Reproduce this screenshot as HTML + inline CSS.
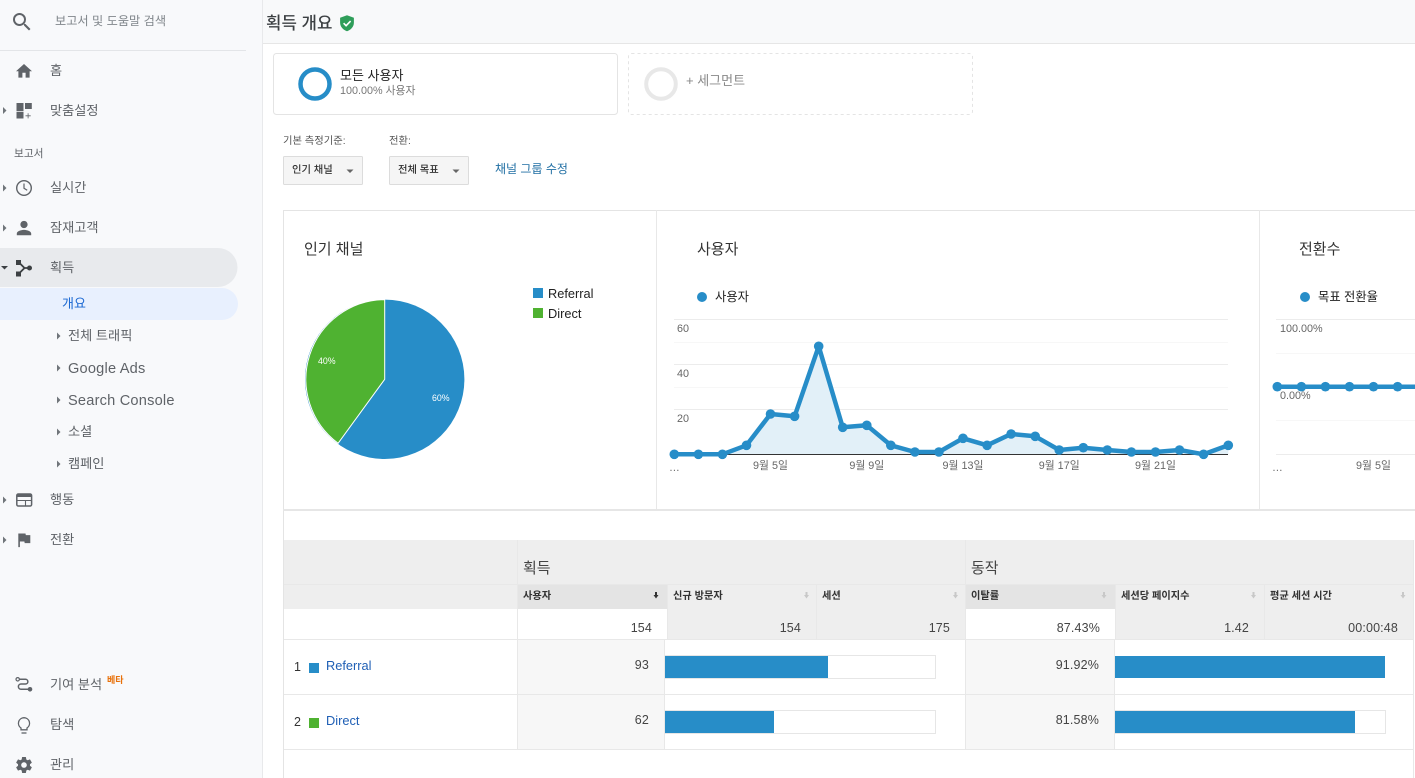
<!DOCTYPE html>
<html lang="ko"><head><meta charset="utf-8"><title>획득 개요</title>
<style>
html,body{margin:0;padding:0;width:1415px;height:778px;overflow:hidden;background:#fff}
svg{display:block;filter:blur(.3px)}
text{font-family:"Liberation Sans","Noto Sans CJK KR",sans-serif}
.nav{font-size:13.2px;fill:#5f6368}
.en{font-size:14.6px;letter-spacing:.2px}
.ic{fill:#5f6368}
.car{fill:#70757a}
.ax{font-size:10.8px;fill:#666}
.th{font-size:10.2px;font-weight:700;fill:#333}
.num{font-size:12.5px;fill:#444;text-anchor:end;letter-spacing:.15px}
.sort{fill:#c8c8c8}
</style></head><body>
<svg width="1415" height="778" viewBox="0 0 1415 778" xmlns="http://www.w3.org/2000/svg">
<rect width="1415" height="778" fill="#fff"/>
<!-- sidebar + header -->
<rect x="0" y="0" width="262" height="778" fill="#f8f9fb"/>
<rect x="262" y="0" width="1" height="778" fill="#e8e9eb"/>
<rect x="263" y="0" width="1152" height="43" fill="#f8f9fa"/>
<rect x="263" y="43" width="1152" height="1" fill="#e6e6e6"/>
<rect x="0" y="50" width="246" height="1" fill="#e3e5e8"/>
<path class="ic" transform="translate(10,10)" d="M15.5 14h-.79l-.28-.27A6.471 6.471 0 0 0 16 9.5 6.5 6.5 0 1 0 9.5 16c1.61 0 3.09-.59 4.23-1.57l.27.28v.79l5 4.99L20.49 19l-4.99-5zm-6 0C7.01 14 5 11.99 5 9.5S7.01 5 9.5 5 14 7.01 14 9.5 11.99 14 9.5 14z"/>
<text x="55" y="25" font-size="12.2" fill="#80868b">보고서 및 도움말 검색</text>

<!-- selected pills -->
<path d="M0 248H218a19.500 19.500 0 0 1 0 39H0z" fill="#e8eaed"/>
<path d="M0 288H222a16 16 0 0 1 0 32H0z" fill="#e8f0fe"/>

<!-- nav icons -->
<path class="ic" transform="translate(14.400,61.600) scale(.8)" d="M10 20v-6h4v6h5v-8h3L12 3 2 12h3v8z"/>
<path class="ic" d="M16.500 103h7v8h-7zM25 103h6.800v6h-6.800zM16.500 111.800h7v6.700h-7zM27.700 113.200h.8v2.200h2.200v.8h-2.200v2.200h-.8v-2.200h-2.200v-.8h2.200z"/>
<circle cx="24" cy="188" r="7.300" fill="none" stroke="#5f6368" stroke-width="1.400"/>
<path d="M24 183.500V188.300L27.200 190.300" fill="none" stroke="#5f6368" stroke-width="1.200"/>
<path class="ic" transform="translate(13.200,217.300) scale(.9)" d="M12 12c2.210 0 4-1.790 4-4s-1.790-4-4-4-4 1.790-4 4 1.790 4 4 4zm0 2c-2.670 0-8 1.340-8 4v2h16v-2c0-2.660-5.330-4-8-4z"/>
<path d="M18.500 262L24.500 268L18.500 274M24.500 268H30" fill="none" stroke="#3c4043" stroke-width="1.800"/>
<rect x="16" y="260" width="5" height="5" fill="#3c4043"/><rect x="16" y="271.500" width="5" height="5" fill="#3c4043"/><circle cx="29.500" cy="268" r="2.500" fill="#3c4043"/>
<rect x="16.800" y="494" width="14.800" height="12" rx="1.500" fill="none" stroke="#5f6368" stroke-width="1.500"/>
<rect x="16.800" y="494" width="14.800" height="3" fill="#5f6368"/>
<path d="M17 500.500H31M25.500 500.500V505.500" stroke="#5f6368" stroke-width="1.100" fill="none"/>
<path class="ic" transform="translate(14.300,530.300) scale(.8)" d="M14.400 6L14 4H5v17h2v-7h5.600l.4 2h7V6z"/>
<circle cx="17.700" cy="679.300" r="1.700" fill="none" stroke="#5f6368" stroke-width="1.200"/>
<path d="M19.500 679.300H25.500a2.300 2.300 0 0 1 0 4.700H21a2.500 2.500 0 0 0 0 5.200H28" fill="none" stroke="#5f6368" stroke-width="1.500"/>
<circle cx="30" cy="689.300" r="2.300" fill="#5f6368"/>
<path d="M24 717.700a5.600 5.600 0 0 0-3 10.300v1.800h6V728a5.600 5.600 0 0 0-3-10.300z" fill="none" stroke="#5f6368" stroke-width="1.300"/>
<path d="M21.500 733h5" stroke="#5f6368" stroke-width="1.300" fill="none"/>
<path class="ic" transform="translate(14.400,755.400) scale(.8)" d="M19.430 12.980c.04-.32.07-.64.07-.98s-.03-.66-.07-.98l2.110-1.650c.19-.15.24-.42.12-.64l-2-3.460c-.12-.22-.39-.3-.61-.22l-2.490 1c-.52-.4-1.080-.73-1.690-.98l-.38-2.650C14.460 2.180 14.250 2 14 2h-4c-.25 0-.46.18-.49.42l-.38 2.650c-.61.25-1.170.59-1.690.98l-2.490-1c-.23-.09-.49 0-.61.22l-2 3.460c-.13.22-.07.49.12.64l2.110 1.650c-.04.32-.07.65-.07.98s.03.66.07.98l-2.110 1.650c-.19.15-.24.42-.12.64l2 3.460c.12.22.39.3.61.22l2.490-1c.52.4 1.080.73 1.690.98l.38 2.650c.03.24.24.42.49.42h4c.25 0 .46-.18.49-.42l.38-2.650c.61-.25 1.170-.59 1.690-.98l2.490 1c.23.09.49 0 .61-.22l2-3.460c.12-.22.07-.49-.12-.64l-2.110-1.650zM12 15.500c-1.930 0-3.500-1.570-3.500-3.500s1.570-3.500 3.500-3.500 3.500 1.570 3.500 3.500-1.570 3.500-3.500 3.500z"/>

<!-- carets -->
<path class="car" d="M3 107l3.500 3.500L3 114zM3 184.500l3.500 3.500L3 191.500zM3 224.500l3.500 3.500L3 231.500zM3 496.500l3.500 3.500L3 503.500zM3 536.500l3.500 3.500L3 543.500z"/>
<path fill="#3c4043" d="M1 266h7l-3.500 3.500z"/>
<path class="car" d="M57 332.500l3.500 3.500L57 339.500zM57 364.500l3.500 3.500L57 371.500zM57 396.500l3.500 3.500L57 403.500zM57 428.500l3.500 3.500L57 435.500zM57 460.500l3.500 3.500L57 467.500z"/>

<!-- nav text -->
<text class="nav" x="50" y="75">홈</text>
<text class="nav" x="50" y="115">맞춤설정</text>
<text x="14" y="157" font-size="10.700" fill="#5f6368">보고서</text>
<text class="nav" x="50" y="192">실시간</text>
<text class="nav" x="50" y="232">잠재고객</text>
<text class="nav" x="50" y="272">획득</text>
<text x="62" y="308" font-size="13" fill="#1967d2">개요</text>
<text class="nav" x="68" y="340">전체 트래픽</text>
<text class="nav en" x="68" y="373">Google Ads</text>
<text class="nav en" x="68" y="405">Search Console</text>
<text class="nav" x="68" y="436">소셜</text>
<text class="nav" x="68" y="468">캠페인</text>
<text class="nav" x="50" y="504">행동</text>
<text class="nav" x="50" y="544">전환</text>
<text class="nav" x="50" y="689">기여 분석</text>
<text x="107" y="683" font-size="9" font-weight="700" fill="#e8710a">베타</text>
<text class="nav" x="50" y="729">탐색</text>
<text class="nav" x="50" y="769">관리</text>

<!-- title -->
<text x="266" y="29" font-size="16.800" font-weight="500" fill="#3c4043">획득 개요</text>
<path d="M347 15.200l6.900 2.600v4.800c0 4.100-2.900 7.200-6.900 8.600-4-1.400-6.900-4.500-6.900-8.600v-4.800z" fill="#2f9e5a"/>
<path d="M343.600 23.200l2.500 2.500 4.500-4.600" fill="none" stroke="#fff" stroke-width="1.600"/>

<!-- segments -->
<rect x="273.500" y="53.500" width="344" height="61" rx="3" fill="#fff" stroke="#e4e4e4"/>
<circle cx="315" cy="84" r="14.500" fill="none" stroke="#268dc8" stroke-width="4.500"/>
<text x="340" y="80" font-size="13" fill="#222">모든 사용자</text>
<text x="340" y="94" font-size="10.800" fill="#777">100.00% 사용자</text>
<rect x="628.500" y="53.500" width="344" height="61" rx="3" fill="#fff" stroke="#e4e4e4" stroke-dasharray="3 3"/>
<circle cx="661" cy="84" r="14.800" fill="none" stroke="#e8e8e8" stroke-width="4"/>
<text x="686" y="85" font-size="13" fill="#888">+ 세그먼트</text>

<!-- dropdowns -->
<text x="283" y="144" font-size="10.300" fill="#555">기본 측정기준:</text>
<text x="389" y="144" font-size="10.300" fill="#555">전환:</text>
<rect x="283.500" y="156.500" width="79" height="28" rx="1" fill="#f5f5f5" stroke="#dcdcdc"/>
<rect x="389.500" y="156.500" width="79" height="28" rx="1" fill="#f5f5f5" stroke="#dcdcdc"/>
<text x="292" y="173" font-size="10.300" font-weight="500" fill="#333">인기 채널</text>
<text x="398" y="173" font-size="10.300" font-weight="500" fill="#333">전체 목표</text>
<path d="M346.500 169.500h7l-3.500 3.500zM452.500 169.500h7l-3.500 3.500z" fill="#666"/>
<text x="495" y="173" font-size="12" fill="#1f6ea3">채널 그룹 수정</text>

<!-- chart frames -->
<rect x="283" y="210" width="1132" height="1" fill="#e4e4e4"/>
<rect x="283" y="210" width="1" height="568" fill="#e4e4e4"/>
<rect x="656" y="210" width="1" height="299" fill="#e8e8e8"/>
<rect x="1259" y="210" width="1" height="299" fill="#e8e8e8"/>
<rect x="283" y="509" width="1132" height="2" fill="#e6e6e6"/>
<text x="304" y="254" font-size="15" fill="#333">인기 채널</text>
<text x="697" y="254" font-size="15" fill="#333">사용자</text>
<text x="1299" y="254" font-size="15" fill="#333">전환수</text>

<!-- pie -->
<circle cx="384.700" cy="379.300" r="79.700" fill="#278dc8"/>
<path d="M384.700 379.300L338.100 443.300A79.700 79.700 0 0 1 384.700 299.600Z" fill="#4fb231" stroke="#fff" stroke-width="1"/>
<text x="318" y="364" font-size="8.800" fill="#fff">40%</text>
<text x="432" y="401" font-size="8.800" fill="#fff">60%</text>
<rect x="533" y="288" width="10" height="10" fill="#278dc8"/>
<rect x="533" y="308" width="10" height="10" fill="#4fb231"/>
<text x="548" y="298" font-size="12.800" fill="#222">Referral</text>
<text x="548" y="318" font-size="12.800" fill="#222">Direct</text>

<!-- users chart -->
<circle cx="702" cy="297" r="5" fill="#278dc8"/>
<text x="715" y="301" font-size="12.300" fill="#222">사용자</text>
<path d="M674 319.500H1228M674 364.500H1228M674 409.500H1228" stroke="#ececec" fill="none"/>
<path d="M674 342.500H1228M674 387.500H1228" stroke="#f7f7f7" fill="none"/>
<polygon fill="#e2f0f8" points="674.300,454.300 698.400,454.300 722.400,454.300 746.500,445.300 770.500,414 794.600,416.300 818.700,346.300 842.700,427.300 866.800,425.300 890.800,445.300 914.900,452 938.900,452 963,438.300 987.100,445.300 1011.100,434 1035.200,436.300 1059.200,450 1083.300,447.700 1107.300,450 1131.400,452 1155.500,452 1179.500,450 1203.600,454.300 1228.300,445.300 1228.300,454.300"/>
<rect x="674" y="454" width="554" height="1" fill="#333"/>
<polyline fill="none" stroke="#278dc8" stroke-width="4.500" stroke-linejoin="round" points="674.300,454.300 698.400,454.300 722.400,454.300 746.500,445.300 770.500,414 794.600,416.300 818.700,346.300 842.700,427.300 866.800,425.300 890.800,445.300 914.900,452 938.900,452 963,438.300 987.100,445.300 1011.100,434 1035.200,436.300 1059.200,450 1083.300,447.700 1107.300,450 1131.400,452 1155.500,452 1179.500,450 1203.600,454.300 1228.300,445.300"/>
<g fill="#278dc8">
<circle cx="674.300" cy="454.300" r="4.800"/><circle cx="698.400" cy="454.300" r="4.800"/><circle cx="722.400" cy="454.300" r="4.800"/><circle cx="746.500" cy="445.300" r="4.800"/><circle cx="770.500" cy="414" r="4.800"/><circle cx="794.600" cy="416.300" r="4.800"/><circle cx="818.700" cy="346.300" r="4.800"/><circle cx="842.700" cy="427.300" r="4.800"/><circle cx="866.800" cy="425.300" r="4.800"/><circle cx="890.800" cy="445.300" r="4.800"/><circle cx="914.900" cy="452" r="4.800"/><circle cx="938.900" cy="452" r="4.800"/><circle cx="963" cy="438.300" r="4.800"/><circle cx="987.100" cy="445.300" r="4.800"/><circle cx="1011.100" cy="434" r="4.800"/><circle cx="1035.200" cy="436.300" r="4.800"/><circle cx="1059.200" cy="450" r="4.800"/><circle cx="1083.300" cy="447.700" r="4.800"/><circle cx="1107.300" cy="450" r="4.800"/><circle cx="1131.400" cy="452" r="4.800"/><circle cx="1155.500" cy="452" r="4.800"/><circle cx="1179.500" cy="450" r="4.800"/><circle cx="1203.600" cy="454.300" r="4.800"/><circle cx="1228.300" cy="445.300" r="4.800"/>
</g>
<text class="ax" x="677" y="332">60</text><text class="ax" x="677" y="377">40</text><text class="ax" x="677" y="422">20</text>
<text class="ax" x="669" y="471">…</text>
<text class="ax" x="770.500" y="469" text-anchor="middle">9월 5일</text>
<text class="ax" x="866.800" y="469" text-anchor="middle">9월 9일</text>
<text class="ax" x="963" y="469" text-anchor="middle">9월 13일</text>
<text class="ax" x="1059.200" y="469" text-anchor="middle">9월 17일</text>
<text class="ax" x="1155.500" y="469" text-anchor="middle">9월 21일</text>

<!-- conversion chart -->
<circle cx="1305" cy="297" r="5" fill="#278dc8"/>
<text x="1318" y="301" font-size="12.300" fill="#222">목표 전환율</text>
<path d="M1276 319.500H1415M1276 454.500H1415" stroke="#ececec" fill="none"/>
<path d="M1276 353.500H1415M1276 420.500H1415" stroke="#f7f7f7" fill="none"/>
<rect x="1277" y="384.500" width="138" height="4.500" fill="#278dc8"/>
<g fill="#278dc8"><circle cx="1277.300" cy="386.700" r="4.800"/><circle cx="1301.400" cy="386.700" r="4.800"/><circle cx="1325.400" cy="386.700" r="4.800"/><circle cx="1349.500" cy="386.700" r="4.800"/><circle cx="1373.500" cy="386.700" r="4.800"/><circle cx="1397.600" cy="386.700" r="4.800"/></g>
<text class="ax" x="1280" y="332">100.00%</text>
<text class="ax" x="1280" y="399">0.00%</text>
<text class="ax" x="1272" y="471">…</text>
<text class="ax" x="1373.500" y="469" text-anchor="middle">9월 5일</text>

<!-- table -->
<rect x="284" y="540" width="1129" height="69" fill="#eeeeee"/>
<rect x="284" y="584" width="1129" height="1" fill="#e8e8e8"/>
<rect x="518" y="585" width="149" height="24" fill="#e4e4e4"/>
<rect x="966" y="585" width="149" height="24" fill="#e4e4e4"/>
<rect x="667" y="609" width="298" height="30" fill="#eeeeee"/>
<rect x="1115" y="609" width="298" height="30" fill="#eeeeee"/>
<rect x="518" y="639" width="146" height="110" fill="#f7f7f7"/>
<rect x="966" y="639" width="149" height="110" fill="#f7f7f7"/>
<path d="M284 639.500H1413M284 694.500H1413M284 749.500H1413" stroke="#e8e8e8" fill="none"/>
<path d="M517.500 540V749M965.500 540V749M667.500 585V639M816.500 585V639M1115.500 585V639M1264.500 585V639M664.500 639V749M1114.500 639V749" stroke="#e8e8e8" fill="none"/>
<rect x="1413" y="540" width="1" height="238" fill="#e8e8e8"/>
<text x="523" y="573" font-size="15" fill="#444">획득</text>
<text x="971" y="573" font-size="15" fill="#444">동작</text>
<text class="th" x="523" y="599">사용자</text>
<text class="th" x="673" y="599">신규 방문자</text>
<text class="th" x="822" y="599">세션</text>
<text class="th" x="971" y="599">이탈률</text>
<text class="th" x="1121" y="599">세션당 페이지수</text>
<text class="th" x="1270" y="599">평균 세션 시간</text>
<path fill="#333" d="M655 592h2v3h1.500l-2.500 3.500-2.500-3.500h1.500z"/>
<g class="sort">
<path d="M805.500 592h2v3h1.500l-2.500 3.500-2.500-3.500h1.500zM954.500 592h2v3h1.500l-2.500 3.500-2.500-3.500h1.500zM1103 592h2v3h1.500l-2.500 3.500-2.500-3.500h1.500zM1252.500 592h2v3h1.500l-2.500 3.500-2.500-3.500h1.500zM1402 592h2v3h1.500l-2.500 3.500-2.500-3.500h1.500z"/>
</g>
<text class="num" x="652" y="632">154</text>
<text class="num" x="801" y="632">154</text>
<text class="num" x="950" y="632">175</text>
<text class="num" x="1100" y="632">87.43%</text>
<text class="num" x="1249" y="632">1.42</text>
<text class="num" x="1398" y="632">00:00:48</text>

<text x="294" y="671" font-size="12.500" fill="#333">1</text>
<rect x="309" y="663" width="10" height="10" fill="#278dc8"/>
<text x="326" y="670" font-size="12.800" fill="#1f5fb5">Referral</text>
<text class="num" x="649" y="669">93</text>
<rect x="665.500" y="655.500" width="270" height="23" fill="#fff" stroke="#e6e6e6"/>
<rect x="665" y="656" width="163" height="22" fill="#278dc8"/>
<text class="num" x="1099" y="669">91.92%</text>
<rect x="1115" y="656" width="270" height="22" fill="#278dc8"/>

<text x="294" y="726" font-size="12.500" fill="#333">2</text>
<rect x="309" y="718" width="10" height="10" fill="#4fb231"/>
<text x="326" y="725" font-size="12.800" fill="#1f5fb5">Direct</text>
<text class="num" x="649" y="724">62</text>
<rect x="665.500" y="710.500" width="270" height="23" fill="#fff" stroke="#e6e6e6"/>
<rect x="665" y="711" width="109" height="22" fill="#278dc8"/>
<text class="num" x="1099" y="724">81.58%</text>
<rect x="1115.500" y="710.500" width="270" height="23" fill="#fff" stroke="#e6e6e6"/>
<rect x="1115" y="711" width="240" height="22" fill="#278dc8"/>
</svg>
</body></html>
